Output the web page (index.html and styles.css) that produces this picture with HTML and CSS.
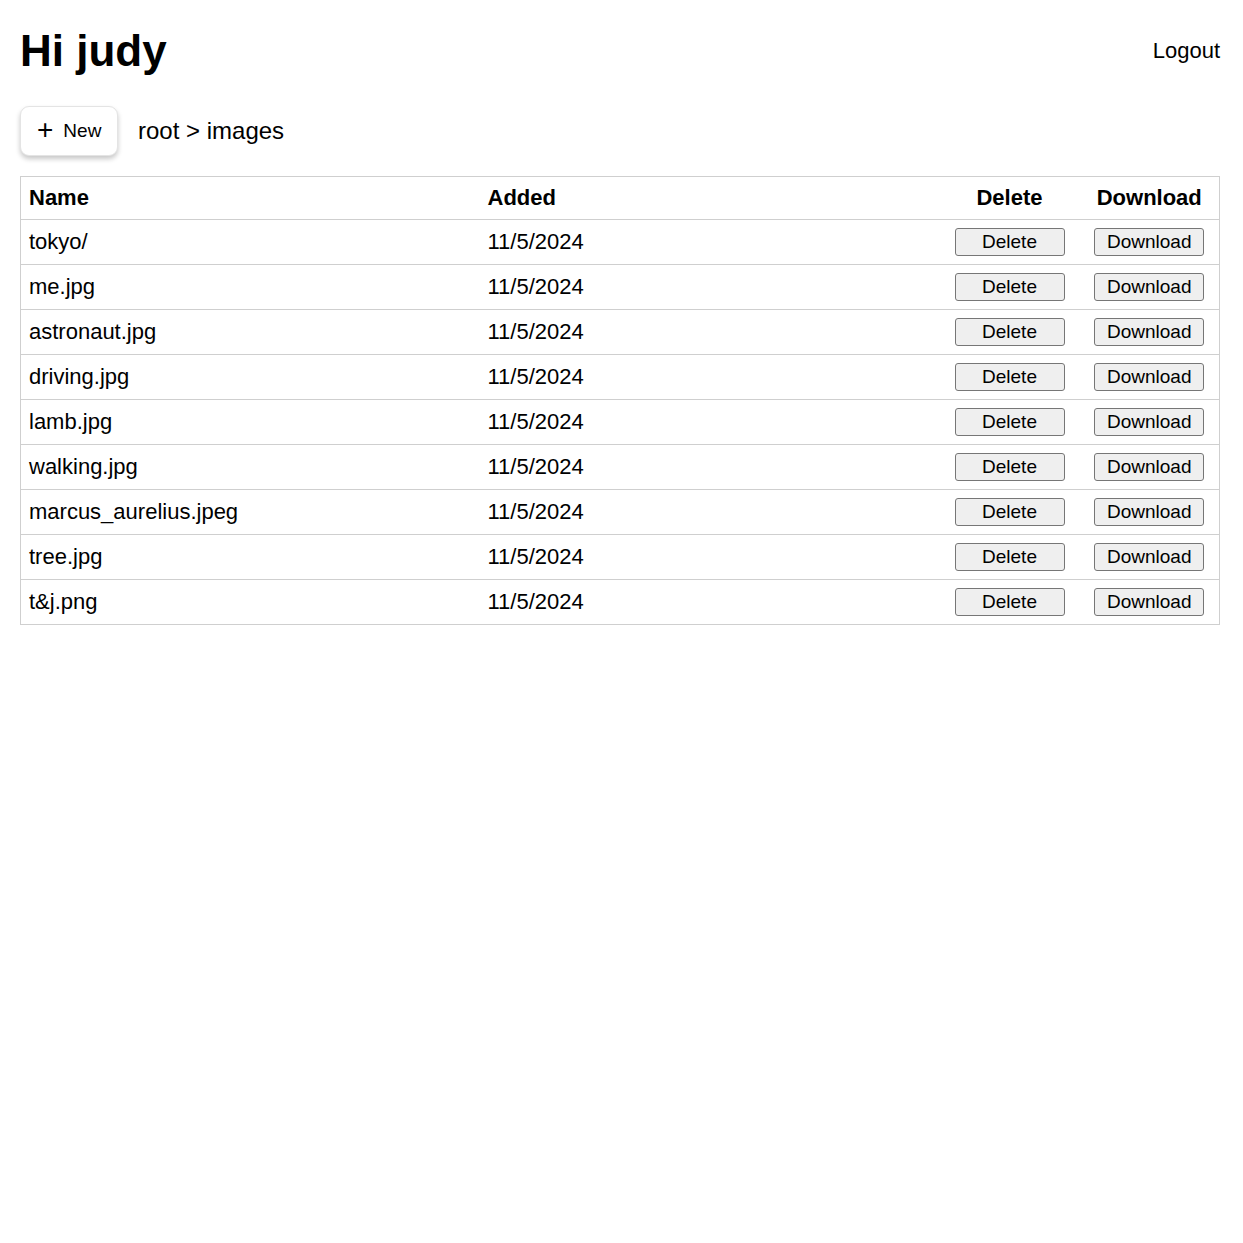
FILE: index.html
```html
<!DOCTYPE html>
<html>
<head>
<meta charset="utf-8">
<link rel="stylesheet" href="styles.css">
</head>
<body>
<div class="page">
<header class="top">
  <h1 class="title">Hi judy</h1>
  <a class="logout">Logout</a>
</header>
<div class="toolbar">
  <button class="new-btn"><span class="plus">+</span><span>New</span></button>
  <span class="crumbs">root &gt; images</span>
</div>
<table class="files">
  <colgroup>
    <col class="c-name"><col class="c-added"><col class="c-del"><col class="c-dl">
  </colgroup>
  <thead>
    <tr><th>Name</th><th>Added</th><th class="center">Delete</th><th class="center">Download</th></tr>
  </thead>
  <tbody>
    <tr><td>tokyo/</td><td>11/5/2024</td><td class="center"><button class="act">Delete</button></td><td class="center"><button class="act">Download</button></td></tr>
    <tr><td>me.jpg</td><td>11/5/2024</td><td class="center"><button class="act">Delete</button></td><td class="center"><button class="act">Download</button></td></tr>
    <tr><td>astronaut.jpg</td><td>11/5/2024</td><td class="center"><button class="act">Delete</button></td><td class="center"><button class="act">Download</button></td></tr>
    <tr><td>driving.jpg</td><td>11/5/2024</td><td class="center"><button class="act">Delete</button></td><td class="center"><button class="act">Download</button></td></tr>
    <tr><td>lamb.jpg</td><td>11/5/2024</td><td class="center"><button class="act">Delete</button></td><td class="center"><button class="act">Download</button></td></tr>
    <tr><td>walking.jpg</td><td>11/5/2024</td><td class="center"><button class="act">Delete</button></td><td class="center"><button class="act">Download</button></td></tr>
    <tr><td>marcus_aurelius.jpeg</td><td>11/5/2024</td><td class="center"><button class="act">Delete</button></td><td class="center"><button class="act">Download</button></td></tr>
    <tr><td>tree.jpg</td><td>11/5/2024</td><td class="center"><button class="act">Delete</button></td><td class="center"><button class="act">Download</button></td></tr>
    <tr><td>t&amp;j.png</td><td>11/5/2024</td><td class="center"><button class="act">Delete</button></td><td class="center"><button class="act">Download</button></td></tr>
  </tbody>
</table>
</div>
</body>
</html>
```
FILE: styles.css
```css
html, body { margin: 0; padding: 0; background: #fff; }
body {
  font-family: "Liberation Sans", Arial, sans-serif;
  color: #000;
  padding: 20px;
}
.page { width: 1200px; }
.top {
  display: flex;
  justify-content: space-between;
  align-items: center;
  height: 62px;
}
.title {
  margin: 0;
  font-size: 44px;
  font-weight: bold;
  line-height: 62px;
}
.logout {
  font-size: 22px;
  cursor: pointer;
}
.toolbar {
  display: flex;
  align-items: center;
  gap: 20px;
  margin-top: 24px;
  margin-bottom: 20px;
}
.new-btn {
  display: flex;
  align-items: center;
  gap: 10px;
  height: 50px;
  width: 98px;
  padding: 0 0 0 16px;
  border: 1px solid #e4e4e4;
  border-radius: 9px;
  background: #fff;
  box-shadow: 0 3px 5px rgba(0,0,0,0.22);
  font-family: "Liberation Sans", Arial, sans-serif;
  font-size: 19px;
  color: #000;
}
.plus { font-size: 28px; line-height: 1; margin-top: -3px; }
.crumbs { font-size: 24px; }
.files {
  width: 1200px;
  border-collapse: collapse;
  border: 1px solid #cfcfcf;
  font-size: 22px;
}
.c-name { width: 459px; }
.c-del { width: 140px; }
.c-dl { width: 140px; }
.files th, .files td {
  text-align: left;
  padding: 0 8px;
  border-bottom: 1px solid #cfcfcf;
  height: 44px;
  vertical-align: middle;
}
.files th { height: 42px; font-weight: bold; }
.files .center { text-align: center; padding: 0; }
.act {
  width: 110px;
  height: 28px;
  padding: 0;
  background: #efefef;
  border: 1px solid #767676;
  border-radius: 3px;
  font-family: "Liberation Sans", Arial, sans-serif;
  font-size: 19px;
  color: #000;
  vertical-align: middle;
}
```
